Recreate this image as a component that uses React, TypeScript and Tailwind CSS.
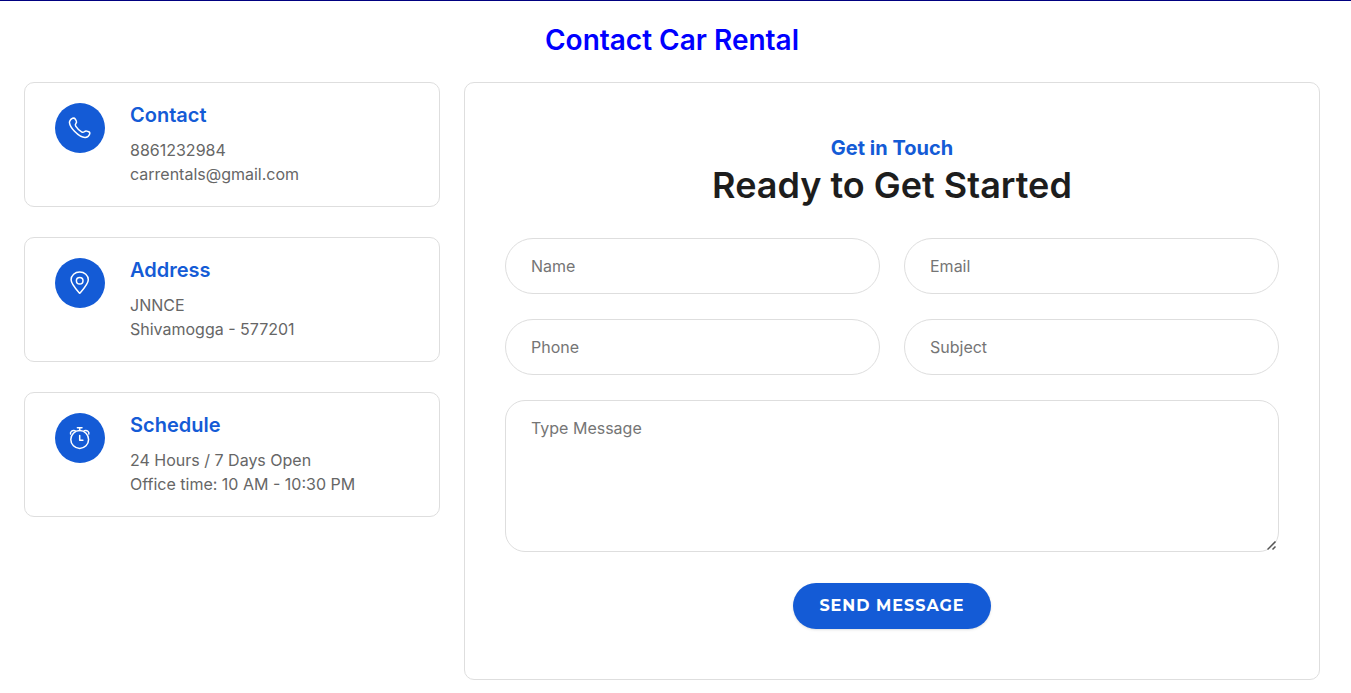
import type { ReactNode } from "react";

const fieldClass =
  "h-14 w-full rounded-full border border-[#dedede] bg-white px-[25px] text-base text-[#212529] outline-none placeholder:text-[#757575] focus:border-[#145bd6]";

function Icon({ children }: { children: ReactNode }) {
  return (
    <svg
      viewBox="0 0 24 24"
      className="size-6"
      fill="none"
      stroke="currentColor"
      strokeWidth="1.5"
      strokeLinecap="round"
      strokeLinejoin="round"
      aria-hidden="true"
    >
      {children}
    </svg>
  );
}

function PhoneIcon() {
  return (
    <Icon>
      <path d="M1.700 5.200C2.200 3.900 3.200 2.800 4.600 2.300 5.800 1.900 6.700 2.200 7.300 3.200L8.300 5C8.800 6 8.600 6.700 7.900 7.500 7.100 8.400 7.100 9.100 7.700 10.100 9 12.200 11.400 14.500 13.600 15.900 14.700 16.600 15.400 16.500 16.300 15.700 17.100 15 17.700 14.700 18.800 15.100L20.700 15.800C21.800 16.300 22.100 17.100 21.600 18.200 20.900 19.900 19.400 21.400 17.200 21.500 14.200 21.600 9.900 18.800 6.500 15.300 3.600 12.300 1.800 9.100 1.500 6.900 1.400 6.200 1.500 5.700 1.700 5.200z" />
    </Icon>
  );
}

function PinIcon() {
  return (
    <Icon>
      <path d="M11.700 22.300c2.200-2.600 8.600-9.300 8.600-13.600a8.600 7.800 0 0 0-17.200 0c0 4.300 6.400 11 8.600 13.600z" />
      <circle cx="11.700" cy="9.700" r="3.300" />
    </Icon>
  );
}

function ClockIcon() {
  return (
    <Icon>
      <circle cx="11.700" cy="13.500" r="8.900" />
      <path d="M9.400 1.700h4.600M11.700 1.700v2.900M11.700 9.500v4.800h3.200" />
      <path d="M2.600 8.100C1.900 6 4.100 3.700 7.100 4.700M20.800 8.100c.7-2.100-1.500-4.400-4.500-3.400" />
    </Icon>
  );
}

function InfoCard({ icon, title, lines }: { icon: ReactNode; title: string; lines: string[] }) {
  return (
    <section className="flex items-start gap-[25px] rounded-[10px] border border-[#dedede] px-[30px] py-5">
      <span className="flex size-[50px] shrink-0 items-center justify-center rounded-full bg-[#145bd6] text-white">
        {icon}
      </span>
      <div>
        <h3 className="mb-[11px] text-xl leading-6 font-semibold text-[#145bd6]">{title}</h3>
        {lines.map((line) => (
          <p key={line} className="text-base leading-6 text-[#666666]">
            {line}
          </p>
        ))}
      </div>
    </section>
  );
}

export default function App() {
  return (
    <main className="border-t border-[#000080] bg-white pr-[31px] pb-3 pl-6 font-['Inter',sans-serif]">
      <h1 className="pt-[22px] pb-[25px] text-center text-[28px] leading-[34px] font-semibold text-[#0000ff]">
        Contact Car Rental
      </h1>
      <div className="grid grid-cols-12 items-start gap-6">
        <div className="col-span-4 flex flex-col gap-[30px]">
          <InfoCard icon={<PhoneIcon />} title="Contact" lines={["8861232984", "carrentals@gmail.com"]} />
          <InfoCard icon={<PinIcon />} title="Address" lines={["JNNCE", "Shivamogga - 577201"]} />
          <InfoCard
            icon={<ClockIcon />}
            title="Schedule"
            lines={["24 Hours / 7 Days Open", "Office time: 10 AM - 10:30 PM"]}
          />
        </div>
        <section className="col-span-8 rounded-[10px] border border-[#dedede] px-10 py-[50px]">
          <header className="mb-[30px] text-center">
            <p className="text-xl leading-[30px] font-bold text-[#145bd6]">Get in Touch</p>
            <h2 className="text-4xl leading-[45px] font-semibold text-[#1d1d1d]">Ready to Get Started</h2>
          </header>
          <form onSubmit={(event) => event.preventDefault()}>
            <div className="grid grid-cols-2 gap-x-6 gap-y-[25px]">
              <input className={fieldClass} type="text" name="name" placeholder="Name" aria-label="Name" />
              <input className={fieldClass} type="email" name="email" placeholder="Email" aria-label="Email" />
              <input className={fieldClass} type="tel" name="phone" placeholder="Phone" aria-label="Phone" />
              <input className={fieldClass} type="text" name="subject" placeholder="Subject" aria-label="Subject" />
              <div className="relative col-span-2">
                <textarea
                  className="block h-[152px] w-full resize-y rounded-[20px] border border-[#dedede] bg-white px-[25px] py-[15px] text-base text-[#212529] outline-none placeholder:text-[#757575] focus:border-[#145bd6] [&::-webkit-resizer]:hidden"
                  name="message"
                  placeholder="Type Message"
                  aria-label="Type Message"
                />
                <svg
                  viewBox="0 0 10 10"
                  className="pointer-events-none absolute right-0.5 bottom-px size-2.5"
                  stroke="#555555"
                  strokeWidth="1.5"
                  aria-hidden="true"
                >
                  <path d="M.5 8.500 8.500.5M5.500 8.500l3-3" />
                </svg>
              </div>
            </div>
            <div className="mt-[31px] text-center">
              <button
                type="submit"
                className="h-[46px] rounded-full bg-[#145bd6] px-[26px] font-['Montserrat','Inter',sans-serif] text-base font-bold tracking-[1px] text-white uppercase shadow-sm"
              >
                Send Message
              </button>
            </div>
          </form>
        </section>
      </div>
    </main>
  );
}
